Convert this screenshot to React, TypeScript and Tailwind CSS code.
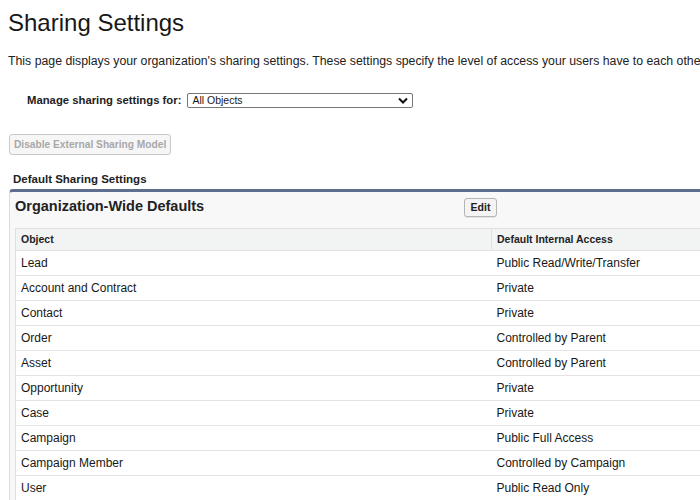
const rows: [string, string][] = [
  ['Lead', 'Public Read/Write/Transfer'],
  ['Account and Contract', 'Private'],
  ['Contact', 'Private'],
  ['Order', 'Controlled by Parent'],
  ['Asset', 'Controlled by Parent'],
  ['Opportunity', 'Private'],
  ['Case', 'Private'],
  ['Campaign', 'Public Full Access'],
  ['Campaign Member', 'Controlled by Campaign'],
  ['User', 'Public Read Only'],
];

export default function App() {
  return (
    <div className="w-[700px] h-[500px] overflow-hidden bg-white text-[#181818] font-['Liberation_Sans',Arial,sans-serif]">
      <div className="w-[1000px]">
        {/* Page title */}
        <h1 className="pl-[8px] pt-[8px] text-[24px] leading-[30px]">Sharing Settings</h1>

        <p className="pl-[8px] mt-[15px] text-[12.3px] leading-[16px] whitespace-nowrap text-[#222]">
          This page displays your organization's sharing settings. These settings specify the level of access your users have to each other's data.
        </p>

        {/* Manage sharing selector */}
        <div className="flex items-center pl-[27px] mt-[23px] h-[16px]">
          <span className="text-[11.3px] font-bold text-[#222]">Manage sharing settings for:</span>
          <div className="ml-[6px] w-[226px] h-[15px] border border-[#767676] rounded-[2px] flex items-center justify-between pl-[4px] pr-[4px] bg-white">
            <span className="text-[10.5px] leading-none">All Objects</span>
            <svg width="10" height="7" viewBox="0 0 10 7" fill="none" stroke="#111" strokeWidth="2">
              <path d="M1 1.5l4 4 4-4" />
            </svg>
          </div>
        </div>

        {/* Disabled button */}
        <div className="pl-[9px] mt-[23px]">
          <button
            disabled
            className="h-[21px] px-[4px] border border-[#c9c9c9] rounded-[3px] bg-[#f6f6f6] text-[10.2px] font-bold text-[#a8a8a8]"
          >
            Disable External Sharing Model
          </button>
        </div>

        <h2 className="pl-[13px] mt-[17px] text-[11.5px] font-bold leading-[14px] text-[#222]">
          Default Sharing Settings
        </h2>

        {/* Panel */}
        <div className="ml-[9px] mt-[3px] border-t-[3px] border-t-[#5d6e8e] border-l border-l-[#dcdcdc] rounded-tl-[4px] bg-[#f8f8f8] pl-[5px]">
          <div className="flex items-center h-[34px] relative">
            <h3 className="pb-[4px] text-[14.5px] font-bold text-[#222]">Organization-Wide Defaults</h3>
            <button className="absolute left-[449px] top-[6px] h-[19px] w-[33px] border border-[#b5b5b5] rounded-[3px] bg-[#f4f4f4] text-[10.5px] font-bold text-[#222] shadow-[0_1px_0_rgba(0,0,0,0.08)]">
              Edit
            </button>
          </div>

          <table className="w-[900px] border-collapse bg-white border-l border-l-[#e0e0e0] mt-[2px]">
            <thead>
              <tr className="h-[22px] bg-[#f2f3f3] border-t border-t-[#e0e0e0] border-b border-b-[#e0e0e0]">
                <th className="w-[476px] text-left pl-[5px] text-[10.5px] font-bold text-[#222] border-r border-r-[#e0e0e0]">
                  Object
                </th>
                <th className="text-left pl-[5px] text-[10.5px] font-bold text-[#222]">Default Internal Access</th>
              </tr>
            </thead>
            <tbody>
              {rows.map(([obj, access]) => (
                <tr key={obj} className="h-[25px] border-b border-b-[#e3e3e3]">
                  <td className="pl-[5px] text-[12px] text-[#181818]">{obj}</td>
                  <td className="pl-[5px] text-[12px] text-[#181818]">{access}</td>
                </tr>
              ))}
            </tbody>
          </table>
        </div>
      </div>
    </div>
  );
}
